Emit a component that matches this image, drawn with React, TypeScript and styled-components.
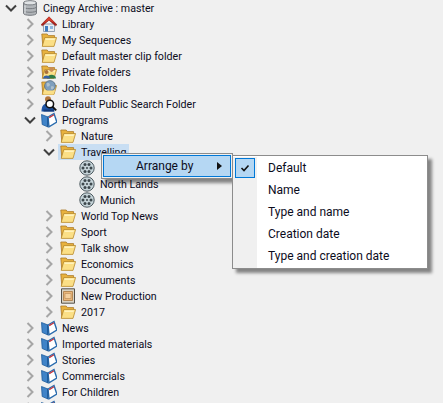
import React from "react";
import styled, { createGlobalStyle } from "styled-components";

const Global = createGlobalStyle`
  html, body { margin: 0; padding: 0; background: #f0f0f0; }
`;

const Page = styled.div`
  position: relative;
  width: 443px;
  height: 403px;
  overflow: hidden;
  background: #f0f0f0;
  color: #0c0c1c;
  font: 12px Roboto, "Liberation Sans", sans-serif;
`;

const Tree = styled.ul`
  list-style: none;
  margin: 0;
  padding: 0;
  font-size: 10.67px;
`;

const Row = styled.li<{ $level: number }>`
  display: flex;
  align-items: center;
  height: 16px;
  padding-left: ${(p) => 5 + p.$level * 19}px;
`;

const Toggle = styled.span`
  display: flex;
  width: 12px;
  height: 16px;
  margin-right: 3px;
  align-items: center;
  justify-content: center;
`;

const Item = styled.span<{ $selected?: boolean }>`
  display: flex;
  align-items: center;
  gap: 5px;
  height: 16px;
  padding: 0 3px 0 2px;
  background: ${(p) => (p.$selected ? "#c8def3" : "transparent")};
  white-space: nowrap;
`;

const Label = styled.span`
  padding-top: 1px;
`;

const Menu = styled.div`
  position: absolute;
  box-sizing: border-box;
  background: #f0f0f0;
  border: 1px solid #8c8c8c;
  box-shadow: 4px 4px 3px rgba(0, 0, 0, 0.45);
`;

const ParentMenu = styled(Menu)`
  left: 101px;
  top: 153px;
  width: 132px;
  height: 26px;
  padding: 1px;
`;

const ParentEntry = styled.div`
  box-sizing: border-box;
  display: flex;
  align-items: center;
  justify-content: space-between;
  height: 22px;
  padding: 0 8px 0 32px;
  background: #b5d7f3;
  border: 1px solid #0078d7;
`;

const SubMenu = styled(Menu)`
  left: 232px;
  top: 155px;
  width: 196px;
  height: 114px;
  padding: 1px 0 0;
  background: #fff;
`;

const Entry = styled.div`
  display: flex;
  height: 22px;
  align-items: center;
`;

const Gutter = styled.span`
  align-self: stretch;
  display: flex;
  align-items: center;
  width: 24px;
  margin-right: 11px;
  background: #f0f0f0;
`;

const CheckBox = styled.span`
  box-sizing: border-box;
  display: flex;
  align-items: center;
  justify-content: center;
  width: 20px;
  height: 20px;
  margin-left: 2px;
  background: #b5d7f3;
  border: 1px solid #0078d7;
`;

const GutterEnd = styled.div`
  width: 24px;
  height: 1px;
  background: #f0f0f0;
`;

type IconName =
  | "db" | "home" | "folder" | "people" | "globe" | "search" | "book" | "reel" | "box";

const Chevron = ({ open }: { open: boolean }) => (
  <svg width="12" height="12" viewBox="0 0 12 12">
    <path
      d={open ? "M1 3.5 6 8.5l5-5" : "M3.5 1 8.5 6l-5 5"}
      fill="none"
      stroke={open ? "#404040" : "#a6a6a6"}
      strokeWidth="2"
    />
  </svg>
);

const FolderShape = () => (
  <>
    <path d="M.8 2h5.4l1.2 1.6h6.2V6.5H4L1.8 14z" fill="#e8b23e" stroke="#a9782a" strokeWidth=".8" />
    <path d="M3.8 5.5H15.6L13 14.4H1.2z" fill="#fbdf86" stroke="#b98a2c" strokeWidth=".8" />
    <path d="M4.8 6.6H14L13.6 8H4.3z" fill="#fff2bd" />
  </>
);

const Icon = ({ name }: { name: IconName }) => {
  let art: React.ReactNode = null;
  if (name === "folder") art = <FolderShape />;
  if (name === "db")
    art = (
      <>
        <path d="M1.5 2.8C1.5 0 14.5 0 14.5 2.8v10.4c0 2.8-13 2.8-13 0z" fill="#b0b4b8" stroke="#777b80" />
        <path d="M1.5 3c0 2.5 13 2.5 13 0M1.5 6.8c0 2.5 13 2.5 13 0M1.5 10.4c0 2.5 13 2.5 13 0" fill="none" stroke="#777b80" />
        <ellipse cx="8" cy="2.8" rx="5.5" ry="1.5" fill="#e0e3e5" />
        <path d="M3 5.5v8M3 5.5" stroke="#d5d8da" strokeWidth="1.4" />
      </>
    );
  if (name === "home")
    art = (
      <>
        <path d="M2.5 8h11v7.5h-11z" fill="#e9edf2" stroke="#7f8ea3" strokeWidth=".8" />
        <path d="M4 10h3v5.5H4z" fill="#3f7cc0" />
        <path d="M9 10h3v3H9z" fill="#8fb8e0" />
        <path d="M0 8.8 8 .8l8 8-1.5 1L8 4.2 1.5 9.8z" fill="#a9201a" stroke="#7c1510" strokeWidth=".5" />
        <path d="M8 .8 14 7 8 4.2 2.5 7.5z" fill="#d8402f" />
      </>
    );
  if (name === "people")
    art = (
      <>
        <FolderShape />
        <circle cx="10.5" cy="5.5" r="2.4" fill="#c98d52" />
        <path d="M6 14.5c0-5 9-5 9 0z" fill="#2f7b46" />
        <circle cx="5.5" cy="8" r="2" fill="#a8703c" />
        <path d="M2 14.5c0-4 7-4 7 0z" fill="#3460a8" />
      </>
    );
  if (name === "globe")
    art = (
      <>
        <FolderShape />
        <circle cx="9" cy="6" r="5.4" fill="#7f9fbd" stroke="#52677d" strokeWidth=".7" />
        <path d="M5.5 3.5c2-1 3 0 3.5 1S7 7 6 6.5zM10 6.5c1.5-.5 3 0 3 1S11 10 10 9z" fill="#aec0cd" />
        <path d="M2.5 14.4h10L14 10.5H4.5z" fill="#fbdf86" />
      </>
    );
  if (name === "search")
    art = (
      <>
        <circle cx="7" cy="3.2" r="3" fill="#b3753a" />
        <path d="M.5 15.5C.5 9 3.5 7.5 7 7.5s6.5 1.5 6.5 8z" fill="#1f55a5" />
        <path d="M2.5 13.5h10.5v2H2.5z" fill="#123a78" />
        <circle cx="8.8" cy="8" r="3.8" fill="#fff" stroke="#111" strokeWidth="1.5" />
        <path d="m11.4 10.6 3.8 3.8" stroke="#111" strokeWidth="2" />
      </>
    );
  if (name === "book")
    art = (
      <>
        <path d="M.5 2.5 7 5v10L1.2 12.5z" fill="#3f83c8" stroke="#205d9c" strokeWidth=".8" />
        <path d="M7 5 13 1.5 15.8 10 8 14.8z" fill="#fff" stroke="#2a6cae" strokeWidth="1.4" />
        <path d="M8.2 5.6 13 2.8" stroke="#c5323a" strokeWidth="1.3" />
        <path d="M6.8 5.2V14.8" stroke="#1c5591" strokeWidth="1" />
      </>
    );
  if (name === "reel")
    art = (
      <>
        <circle cx="8" cy="8" r="7.2" fill="#c5d3d8" stroke="#4d5a60" strokeWidth="1" />
        {[0, 60, 120, 180, 240, 300].map((a) => (
          <circle
            key={a}
            cx={8 + 4 * Math.cos((a * Math.PI) / 180)}
            cy={8 + 4 * Math.sin((a * Math.PI) / 180)}
            r="1.5"
            fill="#3c474c"
          />
        ))}
        <circle cx="8" cy="8" r="1" fill="#3c474c" />
      </>
    );
  if (name === "box")
    art = (
      <>
        <path d="M1.5 .8h13v14.4h-13z" fill="#d9d3c4" stroke="#55514a" />
        <path d="M3.5 3.5h9v9h-9z" fill="#eab67a" stroke="#a97a44" strokeWidth=".8" />
        <path d="M5 5.5h6v5H5z" fill="#f4d0a0" stroke="#b58a58" strokeWidth=".6" />
      </>
    );
  return (
    <svg width="16" height="16" viewBox="0 0 16 16" style={{ flex: "none" }}>
      {art}
    </svg>
  );
};

type Node = {
  level: number;
  label: string;
  icon: IconName;
  toggle?: "open" | "closed";
  selected?: boolean;
};

const nodes: Node[] = [
  { level: 0, label: "Cinegy Archive : master", icon: "db", toggle: "open" },
  { level: 1, label: "Library", icon: "home", toggle: "closed" },
  { level: 1, label: "My Sequences", icon: "folder", toggle: "closed" },
  { level: 1, label: "Default master clip folder", icon: "folder", toggle: "closed" },
  { level: 1, label: "Private folders", icon: "people", toggle: "closed" },
  { level: 1, label: "Job Folders", icon: "globe", toggle: "closed" },
  { level: 1, label: "Default Public Search Folder", icon: "search", toggle: "closed" },
  { level: 1, label: "Programs", icon: "book", toggle: "open" },
  { level: 2, label: "Nature", icon: "folder", toggle: "closed" },
  { level: 2, label: "Travelling", icon: "folder", toggle: "open", selected: true },
  { level: 3, label: "", icon: "reel" },
  { level: 3, label: "North Lands", icon: "reel" },
  { level: 3, label: "Munich", icon: "reel" },
  { level: 2, label: "World Top News", icon: "folder", toggle: "closed" },
  { level: 2, label: "Sport", icon: "folder", toggle: "closed" },
  { level: 2, label: "Talk show", icon: "folder", toggle: "closed" },
  { level: 2, label: "Economics", icon: "folder", toggle: "closed" },
  { level: 2, label: "Documents", icon: "folder", toggle: "closed" },
  { level: 2, label: "New Production", icon: "box", toggle: "closed" },
  { level: 2, label: "2017", icon: "folder", toggle: "closed" },
  { level: 1, label: "News", icon: "book", toggle: "closed" },
  { level: 1, label: "Imported materials", icon: "book", toggle: "closed" },
  { level: 1, label: "Stories", icon: "book", toggle: "closed" },
  { level: 1, label: "Commercials", icon: "book", toggle: "closed" },
  { level: 1, label: "For Children", icon: "book", toggle: "closed" },
  { level: 1, label: "", icon: "book", toggle: "closed" },
];

const sortOptions = ["Default", "Name", "Type and name", "Creation date", "Type and creation date"];

export default function App() {
  return (
    <Page>
      <Global />
      <Tree>
        {nodes.map((n, i) => (
          <Row key={i} $level={n.level}>
            <Toggle>{n.toggle && <Chevron open={n.toggle === "open"} />}</Toggle>
            <Item $selected={n.selected}>
              <Icon name={n.icon} />
              <Label>{n.label}</Label>
            </Item>
          </Row>
        ))}
      </Tree>

      <ParentMenu>
        <ParentEntry>
          Arrange by
          <svg width="5" height="8" viewBox="0 0 5 8">
            <path d="M0 0l5 4-5 4z" fill="#111" />
          </svg>
        </ParentEntry>
      </ParentMenu>

      <SubMenu>
        {sortOptions.map((o, i) => (
          <Entry key={o}>
            <Gutter>
              {i === 0 && (
                <CheckBox>
                  <svg width="10" height="8" viewBox="0 0 10 8">
                    <path d="M1.5 4 4 6.5 8.5 1.5" fill="none" stroke="#111" strokeWidth="1.6" />
                  </svg>
                </CheckBox>
              )}
            </Gutter>
            {o}
          </Entry>
        ))}
        <GutterEnd />
      </SubMenu>
    </Page>
  );
}
